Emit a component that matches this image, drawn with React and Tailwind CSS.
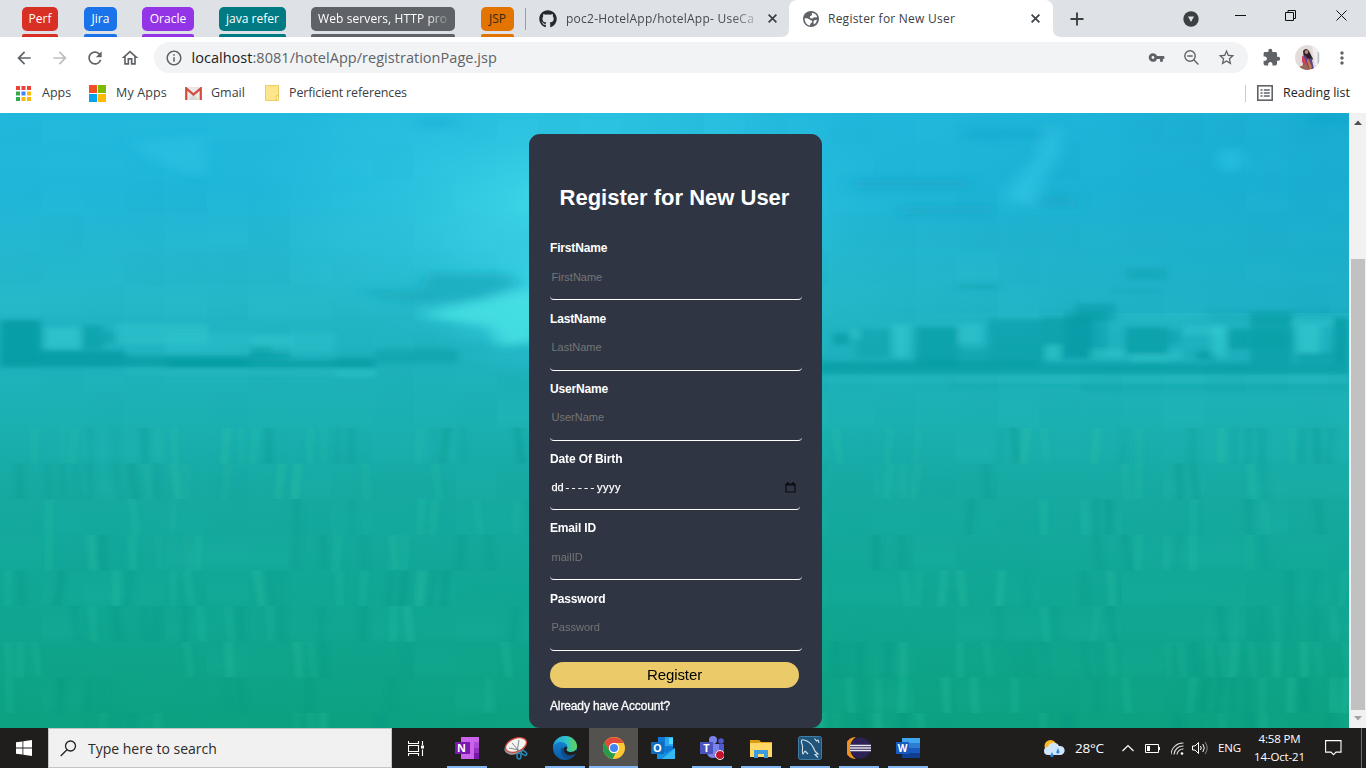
import React from "react";
import {
  MdArrowBack, MdArrowForward, MdRefresh, MdOutlineHome, MdInfoOutline, MdVpnKey,
  MdStarBorder, MdExtension, MdMoreVert,
} from "react-icons/md";
import { FaGithub } from "react-icons/fa";

const COL = 41.4;
const ROW = 35.65;

function noise(a, b) {
  const v = Math.sin(a * 127.1 + b * 311.7) * 43758.5453;
  return v - Math.floor(v);
}

// Soft darker patches along the horizon: x, y, width, height, opacity
const DARK = [
  [0, 207, 41, 47, 0.75], [41, 238, 84, 16, 0.7], [82, 212, 22, 24, 0.5], [104, 218, 12, 12, 0.35],
  [125, 243, 125, 11, 0.6], [166, 247, 209, 8, 0.6], [250, 233, 22, 13, 0.6], [272, 238, 18, 8, 0.45],
  [335, 243, 40, 11, 0.3], [375, 236, 82, 14, 0.36], [457, 230, 71, 8, 0.1],
  [833, 220, 16, 12, 0.6], [857, 216, 34, 28, 0.35], [916, 214, 42, 37, 0.6],
  [958, 236, 30, 15, 0.35], [988, 206, 56, 44, 0.5], [1043, 204, 50, 42, 0.55], [1065, 198, 42, 46, 0.4],
  [1076, 190, 40, 18, 0.45], [1125, 214, 43, 27, 0.6], [1168, 217, 12, 14, 0.4], [1196, 238, 20, 9, 0.6],
  [1228, 216, 22, 20, 0.6], [1208, 198, 141, 12, 0.15], [1250, 199, 42, 51, 0.55], [1250, 218, 42, 18, 0.3],
  [1297, 240, 36, 9, 0.45], [1333, 205, 16, 45, 0.65], [820, 250, 529, 11, 0.55], [820, 248, 220, 5, 0.35],
  [1125, 155, 41, 12, 0.3], [958, 170, 41, 7, 0.25], [1110, 176, 50, 4, 0.2],
];

const LIGHT = [
  [46, 215, 34, 20, 0.45], [116, 211, 92, 20, 0.25], [166, 220, 170, 20, 0.18], [251, 223, 41, 10, 0.25],
  [893, 212, 16, 32, 0.45], [959, 212, 22, 18, 0.35], [1045, 232, 16, 14, 0.55], [1090, 236, 34, 9, 0.4],
  [1130, 242, 40, 5, 0.4], [1184, 212, 40, 10, 0.3], [1212, 214, 14, 30, 0.45], [1292, 205, 42, 8, 0.25],
  [1298, 212, 22, 28, 0.5], [852, 216, 9, 10, 0.35], [1170, 238, 12, 8, 0.35], [125, 256, 250, 6, 0.16],
  [335, 257, 40, 7, 0.25], [820, 264, 529, 5, 0.16],
];

function Scenery() {
  const blocks = [];
  for (let r = 0; r < 18; r++) {
    for (let c = 0; c < 33; c++) {
      const n = noise(c + 1, r + 1);
      const x = c < 20 ? c * COL : c * COL + 4;
      blocks.push(
        <rect key={`b${r}-${c}`} x={x} y={-6 + r * ROW} width={COL} height={ROW}
          fill={n > 0.5 ? "url(#up)" : "url(#down)"} opacity={Math.abs(n - 0.5) * 0.17} />
      );
    }
  }
  const blades = [];
  for (let r = 9; r < 18; r++) {
    for (let c = 0; c < 33; c++) {
      if (noise(c + 70, r + 3) < 0.35) continue;
      for (let k = 0; k < 3; k++) {
        const n = noise(c * 3 + k + 9, r + 40);
        if (n < 0.5) continue;
        const x = c * COL + k * 13 + n * 4;
        const y = -6 + r * ROW;
        const lean = (noise(c + k, r) - 0.5) * 10;
        blades.push(
          <path key={`g${r}-${c}-${k}`} d={`M${x} ${y}h9l${lean} ${ROW}h-8z`}
            fill={n > 0.75 ? "#2cc5a6" : "#008f80"} opacity={0.08 + noise(k + 5, c * r) * 0.2} />
        );
      }
    }
  }
  return (
    <svg className="absolute inset-0 h-full w-full" viewBox="0 0 1349 615" preserveAspectRatio="none">
      <defs>
        <linearGradient id="sky" x1="0" y1="0" x2="0" y2="1">
          <stop offset="0" stopColor="#22b8dd" />
          <stop offset="0.12" stopColor="#1fb6d9" />
          <stop offset="0.2" stopColor="#23b7d2" />
          <stop offset="0.3" stopColor="#24b8c9" />
          <stop offset="0.4" stopColor="#1db1bd" />
          <stop offset="0.5" stopColor="#1bb1b2" />
          <stop offset="0.6" stopColor="#16aaa3" />
          <stop offset="0.78" stopColor="#10a794" />
          <stop offset="1" stopColor="#0ca180" />
        </linearGradient>
        <linearGradient id="up" x1="0" y1="0" x2="0" y2="1">
          <stop offset="0" stopColor="#45d8e4" stopOpacity="0" /><stop offset="0.7" stopColor="#45d8e4" stopOpacity="0.8" /><stop offset="1" stopColor="#45d8e4" stopOpacity="0.3" />
        </linearGradient>
        <linearGradient id="down" x1="0" y1="0" x2="1" y2="1">
          <stop offset="0" stopColor="#008a98" stopOpacity="0.1" /><stop offset="1" stopColor="#008a98" stopOpacity="0.7" />
        </linearGradient>
        <radialGradient id="glow">
          <stop offset="0" stopColor="#48e0ec" stopOpacity="0.8" />
          <stop offset="0.5" stopColor="#3ad2e8" stopOpacity="0.4" />
          <stop offset="1" stopColor="#3cd4ec" stopOpacity="0" />
        </radialGradient>
        <linearGradient id="shade" x1="0" x2="1">
          <stop offset="0.6" stopColor="#0b9cc0" stopOpacity="0" />
          <stop offset="1" stopColor="#0b9cc0" stopOpacity="0.35" />
        </linearGradient>
        <filter id="soft" x="-5%" y="-20%" width="110%" height="140%"><feGaussianBlur stdDeviation="3.8 2.4" /></filter>
        <filter id="cloud" x="-20%" y="-50%" width="140%" height="200%"><feGaussianBlur stdDeviation="8 4" /></filter>
        <filter id="blade" x="-5%" y="-5%" width="110%" height="110%"><feGaussianBlur stdDeviation="2.6 0.4" /></filter>
      </defs>
      <rect width="1349" height="615" fill="url(#sky)" />
      <rect width="1349" height="200" fill="url(#shade)" />
      <ellipse cx="560" cy="90" rx="310" ry="150" fill="url(#glow)" />
      <ellipse cx="560" cy="180" rx="150" ry="90" fill="url(#glow)" />
      {blocks}
      <g filter="url(#soft)">
        {DARK.map(([x, y, w, h, o], i) => <rect key={i} x={x} y={y} width={w} height={h} fill="#00979f" opacity={o} />)}
        {LIGHT.map(([x, y, w, h, o], i) => <rect key={i} x={x} y={y} width={w} height={h} fill="#3ad2d6" opacity={o} />)}
        <path d="M950 271h399v3H950zM1080 275h269v2h-269z" fill="#009a9f" opacity="0.35" />
      </g>
      <g filter="url(#cloud)">
        <path d="M350 178h68l10-18h82l10 12-40 14-60 5z" fill="#12a3b4" opacity="0.6" />
        <path d="M420 202l60-14 60-12v52l-40 6-10-20z" fill="#48e2e4" opacity="0.8" />
        <path d="M855 67h115v8H855zM900 93h90v8H900zM1040 82h35v12h-35z" fill="#0d9fc0" opacity="0.5" />
        <path d="M1005 84l14-22 18-18 8-30h14v28l-16 24-10 28z" fill="#35cdea" opacity="0.5" />
        <path d="M130 30l75-8v42l-50-16z" fill="#37cdec" opacity="0.3" />
        <circle cx="1231" cy="47" r="12" fill="#2fc6e6" opacity="0.6" />
        <path d="M418 6h40v8h-40zM1310 0h39v12h-39zM965 17h85v8h-85z" fill="#0f98bf" opacity="0.3" />
      </g>
      <g filter="url(#blade)">{blades}</g>
    </svg>
  );
}

function CloseGlyph({ box }) {
  return <svg className={`size-[9px] shrink-0 ${box}`} viewBox="0 0 9 9" fill="none" stroke="#3c4043" strokeWidth="1.700"><path d="M.6.600l7.800 7.800M8.400.600L.600 8.400" /></svg>;
}

function Chip({ box, text = "", children }) {
  return (
    <div className={`flex h-[37px] shrink-0 flex-col justify-between pt-[7px] ${box}`}>
      <div className={`flex h-6 items-center justify-center overflow-hidden rounded-[5px] bg-(--chip) whitespace-nowrap ${text}`}>{children}</div>
      <div className="h-[3px] rounded-t-[2px] bg-(--chip)" />
    </div>
  );
}

function TabStrip() {
  return (
    <div className="flex h-[37px] shrink-0 bg-[#dee1e6] text-[12px] text-white">
      <Chip box="ml-[22px] w-9 [--chip:#d93025]">Perf</Chip>
      <Chip box="ml-[26px] w-[33px] [--chip:#1a73e8]">Jira</Chip>
      <Chip box="ml-[25px] w-[52px] [--chip:#9334e6]">Oracle</Chip>
      <Chip box="ml-[25px] w-[67px] [--chip:#007b83]">java refer</Chip>
      <Chip box="ml-[25px] w-36 [--chip:#5f6368]">
        <span className="w-[130px] tracking-[0.100px] [mask-image:linear-gradient(to_right,#000_108px,transparent_134px)]">Web servers, HTTP pro</span>
      </Chip>
      <Chip box="ml-[26px] w-[33px] [--chip:#e37400]" text="text-[#33281a]">JSP</Chip>
      <div className="mt-2 ml-[11px] h-[22px] w-px shrink-0 bg-[#9a9da2]" />
      <div className="flex w-[263px] shrink-0 items-center pl-[13px] text-[#45494d]">
        <FaGithub className="size-[18px] shrink-0 text-[#24292e]" />
        <span className="ml-[9px] w-[194px] shrink-0 tracking-[0.240px] whitespace-nowrap [mask-image:linear-gradient(to_right,#000_165px,transparent_198px)]">poc2-HotelApp/hotelApp- UseCa</span>
        <CloseGlyph box="ml-[8px]" />
      </div>
      <div className="relative flex w-[264px] shrink-0 items-center rounded-t-lg bg-white pl-[14px] text-[#3c4043]">
        <svg className="absolute bottom-0 -left-2 size-2" viewBox="0 0 8 8"><path d="M8 0v8H0q8 0 8-8z" fill="#fff" /></svg>
        <svg className="absolute -right-2 bottom-0 size-2" viewBox="0 0 8 8"><path d="M0 0v8h8Q0 8 0 0z" fill="#fff" /></svg>
        <svg className="size-4 shrink-0" viewBox="0 0 16 16">
          <circle cx="8" cy="8" r="8" fill="#5f6368" />
          <path d="M1.700 7.200c2.300-.2 4.300.4 5.300 1.600.7.900 2.200.4 2.300 1.700.1 1.300-1.600 1.400-2 2.400-.3.600-.1 1.200-.5 1.600C3.800 14 1.500 11 1.700 7.200zM8.900 1.700c2.500.3 4.500 1.900 5.200 4.100-.8 1.200-1.600.4-2.600.5-1.400.1-1.500 1.500-3 1.200C7 7.200 6.300 6 7.100 5.200c.6-.6 1.700-.2 2-1 .3-.9-.7-1.600-.2-2.500z" fill="#fff" />
          <path d="M11 9.500c1-.8 2.300-.4 3-.8-.3 2.200-1.600 4-3.400 4.900.6-1.400-.9-2.700.4-4.100z" fill="#fff" />
        </svg>
        <span className="ml-[9px] w-[199px] shrink-0 tracking-[0.240px] whitespace-nowrap">Register for New User</span>
        <CloseGlyph box="ml-[4px]" />
      </div>
      <div className="flex flex-1 items-center text-[#3c4043]">
        <svg className="ml-[17px] size-[14px] shrink-0" viewBox="0 0 14 14" fill="none" stroke="#3c4043" strokeWidth="1.900"><path d="M7 .5v13M.5 7h13" /></svg>
        <svg className="ml-[99px] size-4 shrink-0" viewBox="0 0 16 16"><circle cx="8" cy="8" r="7.700" fill="#3c4043" /><path d="M5 5.500h6L8 11z" fill="#dee1e6" /></svg>
        <svg className="mb-[6px] ml-[36px] h-[13px] w-[113px] shrink-0" viewBox="0 0 113 13" fill="none" stroke="#111" strokeWidth="1">
          <path d="M0 6.500h11" />
          <path d="M50.500 3.500h8v8h-8zM53 3.500V1.500h7.500v8H59" />
          <path d="M101.500 1.500l10 10M111.500 1.500l-10 10" />
        </svg>
      </div>
    </div>
  );
}

function Toolbar() {
  return (
    <div className="flex h-[41px] shrink-0 items-center bg-white text-[#5f6368]">
      <MdArrowBack className="ml-[14px] size-5 shrink-0" />
      <MdArrowForward className="ml-4 size-5 shrink-0 text-[#bcbec1]" />
      <MdRefresh className="ml-[15px] size-5 shrink-0" />
      <MdOutlineHome className="ml-[15px] size-5 shrink-0" />
      <div className="ml-[14px] flex h-[31px] w-[1094px] shrink-0 items-center rounded-full bg-[#f1f3f4]">
        <MdInfoOutline className="ml-[11px] size-[18px] shrink-0" />
        <span className="ml-[8.500px] w-[940px] text-[14.5px] tracking-[0.030px] whitespace-nowrap"><span className="text-[#202124]">localhost</span>:8081/hotelApp/registrationPage.jsp</span>
        <MdVpnKey className="ml-[16.500px] size-[17px] shrink-0" />
        <svg className="ml-[19px] size-[15px] shrink-0" viewBox="0 0 15 15" fill="none" stroke="#5f6368" strokeWidth="1.400"><circle cx="6" cy="6" r="5.200" /><path d="M3.300 6h5.400M9.800 9.800l4.600 4.600" /></svg>
        <MdStarBorder className="ml-[18px] size-[19px] shrink-0" />
      </div>
      <MdExtension className="ml-[14px] size-[19px] shrink-0" />
      <svg className="ml-[14px] size-[25px] shrink-0" viewBox="0 0 25 25">
        <clipPath id="av"><circle cx="12.500" cy="12.500" r="12.500" /></clipPath>
        <g clipPath="url(#av)">
          <rect width="25" height="25" fill="#e2dddb" />
          <path d="M17 0h8v20h-5z" fill="#efeeed" />
          <path d="M22.500 7h1.500v12h-1.500z" fill="#b9c4c5" />
          <path d="M8 6q3-4 6 0l4 8-4 4-5-4z" fill="#2e2027" />
          <circle cx="11.500" cy="7" r="1.900" fill="#b98672" />
          <path d="M8 12l2-2 3 4 3.500-1L19 24H8z" fill="#5a4590" />
          <path d="M7 10.500l3 3 4 11h-3l-4-8z" fill="#cf3f59" />
          <path d="M13 13l4 9-2 3-3-9z" fill="#c77945" />
          <path d="M4 22l7-3 4 6H4z" fill="#9a6656" />
        </g>
      </svg>
      <MdMoreVert className="ml-[12px] size-5 shrink-0" />
    </div>
  );
}

function Bookmarks() {
  const dots = ["#ea4335", "#ea4335", "#ea4335", "#34a853", "#4285f4", "#fbbc05", "#34a853", "#fbbc05", "#fbbc05"];
  return (
    <div className="flex h-[35px] shrink-0 items-center bg-white pb-[5px] text-[12.5px] text-[#3c4043]">
      <svg className="ml-4 size-[15px] shrink-0" viewBox="0 0 15 15">
        {dots.map((c, i) => <rect key={i} x={(i % 3) * 5.5} y={Math.floor(i / 3) * 5.5} width="4" height="4" fill={c} />)}
      </svg>
      <span className="ml-[11px] w-[47px] shrink-0">Apps</span>
      <svg className="size-[17px] shrink-0" viewBox="0 0 17 17">
        <path fill="#f25022" d="M0 0h8v8H0z" /><path fill="#7fba00" d="M9 0h8v8H9z" /><path fill="#00a4ef" d="M0 9h8v8H0z" /><path fill="#ffb900" d="M9 9h8v8H9z" />
      </svg>
      <span className="ml-[10px] w-[69px] shrink-0 tracking-[0.150px]">My Apps</span>
      <svg className="h-[13px] w-[17px] shrink-0" viewBox="0 0 17 13">
        <path fill="#e9e9e9" d="M1 0h15v13H1z" /><path fill="#d9d9d9" d="M3 13l5.500-5.500L14 13z" />
        <path d="M1.200 13V1.300L8.500 7.500l7.300-6.200V13" fill="none" stroke="#d54b3d" strokeWidth="2.200" />
      </svg>
      <span className="ml-[9px] w-[54px] shrink-0">Gmail</span>
      <svg className="h-4 w-[14px] shrink-0" viewBox="0 0 14 16"><path d="M.5.5h13v12l-2.500 3H.5z" fill="#fde58b" stroke="#ebcd63" /><path d="M13.500 10.500h-2l-.5 5h2.500z" fill="#fdf0b5" stroke="#e5c44d" strokeWidth=".8" /></svg>
      <span className="ml-[10px] w-[956px] shrink-0 tracking-[-0.130px]">Perficient references</span>
      <div className="h-[17px] w-px shrink-0 bg-[#c9cbce]" />
      <svg className="ml-[11px] size-4 shrink-0" viewBox="0 0 16 16" fill="none" stroke="#5f6368">
        <rect x=".8" y=".8" width="14.400" height="14.400" strokeWidth="1.600" />
        <path d="M3.500 5h2M3.500 8h2M3.500 11h2M6.800 5h6M6.800 8h6M6.800 11h6" strokeWidth="1.500" />
      </svg>
      <span className="ml-[10px] shrink-0 whitespace-nowrap text-[#202124]">Reading list</span>
    </div>
  );
}

function Field({ label, placeholder }) {
  return (
    <label className="block h-[70.300px] shrink-0">
      <span className="block h-4 text-[12px] leading-4 font-bold tracking-[-0.170px]">{label}</span>
      <input placeholder={placeholder} className="mt-[2px] block h-[42px] w-[252px] rounded-[4px] border-b border-white bg-transparent px-[1.500px] pb-[4px] text-[11px] outline-none placeholder:text-[#757575]" />
    </label>
  );
}

function RegisterPage() {
  return (
    <div className="relative flex h-[615px] shrink-0">
      <main className="relative flex w-[1349px] shrink-0 justify-center overflow-hidden">
        <Scenery />
        <form className="relative mt-[21px] ml-px h-[594px] w-[293px] rounded-[11px] bg-[#2f3543] pl-[21.500px] font-['Liberation_Sans',Arial,sans-serif] text-white">
          <h1 className="mt-[50px] w-[249px] text-center text-[22px] leading-7 font-bold whitespace-nowrap">Register for New User</h1>
          <div className="mt-[28.300px] flex flex-col">
            <Field label="FirstName" placeholder="FirstName" />
            <Field label="LastName" placeholder="LastName" />
            <Field label="UserName" placeholder="UserName" />
            <div className="h-[69.300px] shrink-0">
              <span className="block h-4 text-[12px] leading-4 font-bold tracking-[-0.120px]">Date Of Birth</span>
              <div className="mt-[2px] flex h-[41px] w-[250px] items-center justify-between rounded-[4px] border-b border-white pr-[4px] pb-[3px] pl-[1.500px] text-[11px] [-webkit-text-stroke:0.25px_white]">
                <span className="flex"><span className="w-[14px]">dd</span><span className="w-[31.500px] tracking-[2.600px]">-----</span><span className="tracking-[0.500px]">yyyy</span></span>
                <svg className="size-[11px]" viewBox="0 0 11 11"><path d="M1 2.500h9V10H1z" fill="none" stroke="#0b0c10" strokeWidth="1.200" /><path d="M.5 1.500h10v2H.5zM2 0h1.500v2H2zM7.500 0H9v2H7.500z" fill="#0b0c10" /></svg>
              </div>
            </div>
            <Field label="Email ID" placeholder="mailID" />
            <Field label="Password" placeholder="Password" />
          </div>
          <button type="button" className="mt-[0.700px] block h-[26px] w-[249px] rounded-full bg-[#ebcb69] text-[15px] leading-[26px] tracking-[-0.100px] text-black">Register</button>
          <a className="mt-[10px] block text-[12px] leading-4 tracking-[-0.13px] [-webkit-text-stroke:0.3px_white]">Already have Account?</a>
        </form>
      </main>
      <div className="flex w-[17px] shrink-0 flex-col items-center bg-[#f1f1f1]">
        <svg className="mt-[7px] ml-px h-[5px] w-2" viewBox="0 0 8 5"><path d="M0 5l4-4.500L8 5z" fill="#505050" /></svg>
        <div className="mt-[134px] ml-px h-[451px] w-[14px] bg-[#c1c1c1]" />
        <svg className="mt-[6px] ml-px h-[5px] w-2" viewBox="0 0 8 5"><path d="M0 0l4 4.500L8 0z" fill="#a3a3a3" /></svg>
      </div>
    </div>
  );
}

function TaskCell({ on, active, children }) {
  return (
    <div className={`flex h-10 w-[49px] shrink-0 flex-col items-center ${active ? "bg-[#54524f]" : ""}`}>
      <div className="flex h-[38px] items-center pt-[2px]">{children}</div>
      {on && <div className={`h-[2px] bg-[#82b7f5] ${active ? "w-full" : "w-10"}`} />}
    </div>
  );
}

const badge = "font-['Open_Sans',sans-serif] font-bold";

function Taskbar() {
  return (
    <div className="flex h-10 shrink-0 bg-[#1f1e1d] text-white">
      <div className="flex w-12 shrink-0 items-center justify-center">
        <svg className="size-4" viewBox="0 0 16 16" fill="#fff"><path d="M0 2.300L6.500 1.400v6.200H0zM7.300 1.300L16 0v7.600H7.300zM0 8.400h6.500v6.200L0 13.700zM7.300 8.400H16V16l-8.700-1.200z" /></svg>
      </div>
      <div className="flex w-[344px] shrink-0 items-center border border-[#c4c4c4] bg-[#f1f1f1] text-[14px] text-[#2b2b2b]">
        <svg className="ml-[11px] size-[17px]" viewBox="0 0 17 17" fill="none" stroke="#222" strokeWidth="1.300"><circle cx="10.500" cy="6" r="5" /><path d="M7 9.700L.7 16" /></svg>
        <span className="ml-[11px]">Type here to search</span>
      </div>
      <div className="flex w-[50px] shrink-0 items-center pl-4">
        <svg className="h-[15px] w-4" viewBox="0 0 16 15" fill="none" stroke="#fff" strokeWidth="1.100"><path d="M.5 0v2.500h10V0M.5 4.500h10v6H.5zM.5 15v-2.500h10V15M14.500 0v4M14.500 8.500V15" /><path d="M13 4.500h3v3h-3z" fill="#fff" stroke="none" /></svg>
      </div>
      <TaskCell on>
        <svg className="h-[22px] w-6" viewBox="0 0 24 22"><path fill="#ca64ea" d="M6 0h18v22H6z" /><path fill="#ae4bd5" d="M19 5h5v6h-5z" /><path fill="#9332bf" d="M19 11h5v5h-5z" /><path fill="#7719aa" d="M19 16h5v6h-5z" /><path fill="#7b18ad" d="M0 5h15v12H0z" /><text x="6.500" y="15" textAnchor="middle" fontSize="11" fill="#fff" className={badge}>N</text></svg>
      </TaskCell>
      <TaskCell>
        <svg className="h-[23px] w-6" viewBox="0 0 24 23"><ellipse cx="11" cy="10" rx="11" ry="7" transform="rotate(-22 11 10)" fill="#9a9a99" /><ellipse cx="12" cy="8" rx="11" ry="6.500" transform="rotate(-22 12 8)" fill="#f3f3f1" stroke="#d1443b" strokeWidth="1.300" /><path d="M8 6l7 8M15 3l-2 12M5 11l10 2" stroke="#83898c" fill="none" /><ellipse cx="15" cy="19" rx="2" ry="3" fill="none" stroke="#2688b5" strokeWidth="1.500" /><ellipse cx="20" cy="16" rx="3" ry="1.800" transform="rotate(35 20 16)" fill="none" stroke="#2688b5" strokeWidth="1.500" /></svg>
      </TaskCell>
      <TaskCell on>
        <svg className="size-6" viewBox="0 0 24 24"><defs><linearGradient id="eg" x1="0" x2="1"><stop stopColor="#22a0dd" /><stop offset=".55" stopColor="#2fc3c8" /><stop offset="1" stopColor="#66d34f" /></linearGradient><linearGradient id="eb" y1="0" y2="1" x2="0"><stop stopColor="#1490df" /><stop offset="1" stopColor="#0c59a4" /></linearGradient></defs><circle cx="12" cy="12" r="12" fill="url(#eb)" /><path d="M0 11C1 4 6 0 12 0c7 0 12 5 12 10 0 4-3 6-6.500 6-3 0-4-1-4-2 0-.7 1-1.200 1-3C14.500 8 11 6 7.500 6 4 6 1 8 0 11z" fill="url(#eg)" /><path d="M9 11c-3 4 0 11 6 12 3-.5 6-2.500 7.500-5.500C17 20 10 17 9 11z" fill="#124b8c" /><path d="M14.200 11.500c0 1-1 1.700-.7 2.500.5 1.500 2.500 2 4 2 2.500 0 4.500-.8 6-2.500l.5 3-1.500 1.500c-4 2-9.500 1.500-11.500-2.500-1.500-3 1-6 3.200-4z" fill="#1f1e1d" /></svg>
      </TaskCell>
      <TaskCell on active>
        <svg className="size-[22px]" viewBox="0 0 24 24"><circle cx="12" cy="12" r="12" fill="#fcc934" /><path d="M1.600 6A12 12 0 0 1 22.400 6.500H12L7 15z" fill="#e14a3c" /><path d="M1.600 6L7.200 15A5.500 5.500 0 0 0 14 17L10.500 24A12 12 0 0 1 1.600 6z" fill="#279b4a" /><circle cx="12" cy="12" r="5.600" fill="#fff" /><circle cx="12" cy="12" r="4.400" fill="#4285f4" /></svg>
      </TaskCell>
      <TaskCell>
        <svg className="h-[22px] w-6" viewBox="0 0 24 22"><path fill="#0f78d4" d="M7 0h15v18H7z" /><path fill="#28a8ea" d="M14 0h8v9h-8z" /><path fill="#50d9ff" d="M18 1h4v6h-4z" /><path fill="#1490df" d="M6 11l9 5 9-5v11H6z" /><path fill="#35b8f1" d="M24 11v11H11z" /><path fill="#0f6cbd" d="M0 5h13v12H0z" /><text x="6.500" y="15" textAnchor="middle" fontSize="11" fill="#fff" className={badge}>O</text></svg>
      </TaskCell>
      <TaskCell on>
        <svg className="h-6 w-6" viewBox="0 0 24 24"><circle cx="13" cy="4" r="4" fill="#7b83eb" /><circle cx="21" cy="5" r="2.800" fill="#5059c9" /><path d="M16 8h8v8q-1 4-5 3z" fill="#5059c9" /><path d="M7 8h12v9q-1 5-6 5-5 0-6-5z" fill="#7b83eb" /><path fill="#4b53bc" d="M0 6h13v12H0z" /><text x="6.500" y="16" textAnchor="middle" fontSize="11" fill="#fff" className={badge}>T</text><circle cx="20" cy="19" r="4.500" fill="#c4122f" stroke="#eee" strokeWidth="1" /></svg>
      </TaskCell>
      <TaskCell on>
        <svg className="h-[19px] w-[22px]" viewBox="0 0 22 19"><path d="M0 1h9l2 2h11v15H0z" fill="#e8a317" /><path d="M0 4h22v14H0z" fill="#ffd866" /><path d="M0 1h9v3H0z" fill="#dc9c12" /><path d="M4 11h14v8h-4v-4H8v4H4z" fill="#3b9ddd" /></svg>
      </TaskCell>
      <TaskCell on>
        <svg className="size-6" viewBox="0 0 24 24"><rect x=".5" y=".5" width="23" height="23" rx="2" fill="#1f557d" stroke="#3f7da2" /><path d="M7 15l-2 3C3 14 6 12 4 8 2.500 5 3.500 3 6 4c4 1 7 3 9 7 1 3 2 5 5 7l-3 .5 3 3M7 15l3 3M16.500 2.500l2 2.500 1.500-1 1 3" fill="none" stroke="#d5e0e6" strokeWidth="1.100" /></svg>
      </TaskCell>
      <TaskCell on>
        <svg className="h-[22px] w-6" viewBox="0 0 24 22"><path d="M9 0A11 11 0 0 0 9 22 13 13 0 0 1 9 0z" fill="#f0921e" /><circle cx="13.500" cy="11" r="10.500" fill="#2c2255" /><path d="M3 8.500h21M3 11h21M3 13.500h21" stroke="#e9e7f0" strokeWidth="1.300" /></svg>
      </TaskCell>
      <TaskCell on>
        <svg className="h-5 w-6" viewBox="0 0 24 20"><path fill="#41a5ee" d="M6 0h18v5H6z" /><path fill="#2b7cd3" d="M6 5h18v5H6z" /><path fill="#185abd" d="M6 10h18v5H6z" /><path fill="#103f91" d="M6 15h18v5H6z" /><path fill="#185abd" d="M0 4h13v12H0z" /><text x="6.500" y="14" textAnchor="middle" fontSize="10" fill="#fff" className={badge}>W</text></svg>
      </TaskCell>
      <div className="flex flex-1 items-center text-[12px]">
        <svg className="ml-[112px] h-[17px] w-[21px] shrink-0" viewBox="0 0 21 17"><circle cx="6.500" cy="6" r="6" fill="#fbb829" /><path d="M4 15a4 4 0 0 1 0-8 6 6 0 0 1 11-1 4.500 4.500 0 0 1 2 9z" fill="#cfe6fa" /><path d="M8 12l-1.500 3a1.500 1.500 0 1 0 2.800 0zM14 8l-1.500 3.500a1.500 1.500 0 1 0 2.800 0z" fill="#2f86dd" /></svg>
        <span className="ml-[10px] w-[47px] shrink-0 text-[13.500px] tracking-[-0.200px]">28°C</span>
        <svg className="h-2 w-3 shrink-0" viewBox="0 0 12 8" fill="none" stroke="#fff" strokeWidth="1.200"><path d="M.5 7L6 1.500 11.500 7" /></svg>
        <svg className="ml-[11px] h-[9px] w-[15px] shrink-0" viewBox="0 0 15 9"><path d="M.5.5h13v8H.5z" fill="none" stroke="#fff" /><path d="M2 2h3v5H2zM14 3h1v3h-1z" fill="#fff" /></svg>
        <svg className="ml-[11px] size-[13px] shrink-0" viewBox="0 0 13 13" fill="none" stroke="#ddd" strokeWidth="1.100"><path d="M0 12.500A12 12 0 0 1 12.500 1M3 12.500A9 9 0 0 1 12.500 4M6 12.500A6 6 0 0 1 12.500 7" /><circle cx="11" cy="11.500" r="1.300" fill="#fff" stroke="none" /></svg>
        <svg className="ml-[8px] h-[14px] w-4 shrink-0" viewBox="0 0 16 14" fill="none" stroke="#fff"><path d="M.5 5h2.500l3.500-3.500v11L3 9H.5z" /><path d="M8.500 5q1.500 2 0 4M10.800 3q3 4 0 8" /><path d="M13 1q4.500 6 0 12" stroke="#888" /></svg>
        <span className="ml-[10px] w-[36px] shrink-0 text-[11.500px] tracking-[-0.200px]">ENG</span>
        <div className="w-[51px] shrink-0 text-center text-[11.500px] leading-[18px] tracking-[-0.150px] whitespace-nowrap"><div>4:58 PM</div><div>14-Oct-21</div></div>
        <svg className="ml-[20px] h-4 w-[17px] shrink-0" viewBox="0 0 17 16" fill="none" stroke="#fff" strokeWidth="1.100"><path d="M.6.6h15.400v11.500H11l-2.500 2.500L6 12.100H.6z" /></svg>
        <div className="ml-[19px] h-10 w-px shrink-0 bg-[#6b6b6a]" />
      </div>
    </div>
  );
}

export default function App() {
  return (
    <div className="flex h-[768px] w-[1366px] flex-col overflow-hidden font-['Open_Sans','Noto_Sans',sans-serif]">
      <TabStrip />
      <Toolbar />
      <Bookmarks />
      <RegisterPage />
      <Taskbar />
    </div>
  );
}
